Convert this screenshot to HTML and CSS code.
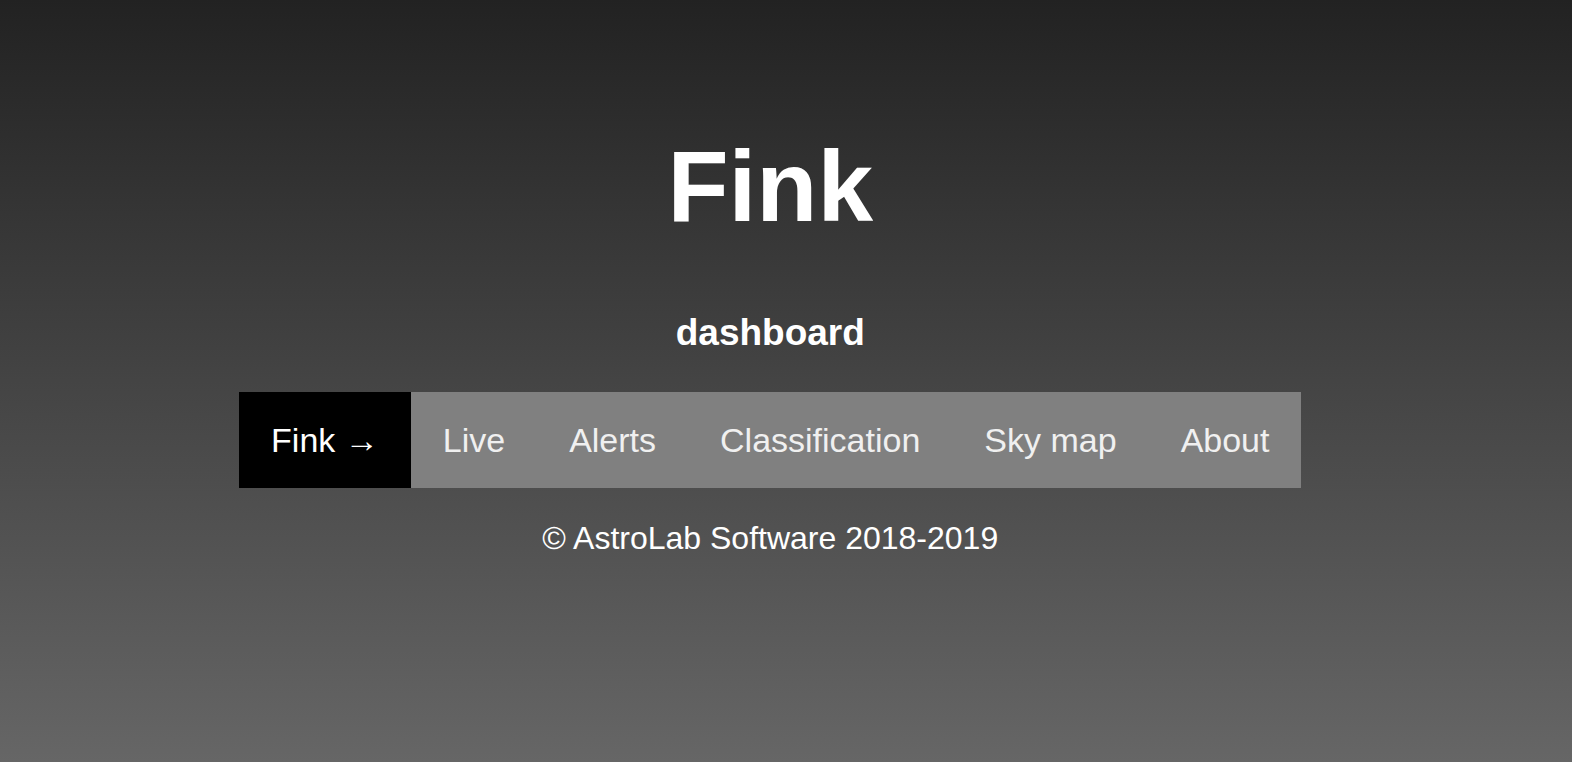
FILE: index.html
```html
<!DOCTYPE html>
<html lang="en">
<head>
<meta charset="utf-8">
<title>Fink dashboard</title>
<link rel="stylesheet" href="styles.css">
</head>
<body>
<main class="page">
  <h1 class="title">Fink</h1>
  <h2 class="subtitle">dashboard</h2>
  <nav class="nav">
    <a class="nav-item nav-item--home" href="#">Fink →</a>
    <a class="nav-item" href="#">Live</a>
    <a class="nav-item" href="#">Alerts</a>
    <a class="nav-item" href="#">Classification</a>
    <a class="nav-item" href="#">Sky map</a>
    <a class="nav-item" href="#">About</a>
  </nav>
  <footer class="footer">© AstroLab Software 2018-2019</footer>
</main>
</body>
</html>
```

FILE: styles.css
```css
html, body {
  margin: 0;
  padding: 0;
  height: 100%;
}

body {
  background: linear-gradient(to bottom, #222222 0%, #666666 100%);
  font-family: "Liberation Sans", Arial, sans-serif;
  color: #ffffff;
  min-height: 762px;
}

.page {
  width: 98%;
  display: flex;
  flex-direction: column;
  align-items: center;
  padding-top: 129px;
}

.title {
  margin: 0;
  font-size: 100px;
  font-weight: bold;
  line-height: 115px;
}

.subtitle {
  margin: 67px 0 0;
  font-size: 37px;
  font-weight: bold;
  line-height: 43px;
}

.nav {
  margin-top: 38px;
  display: flex;
  background: #808080;
}

.nav-item {
  display: block;
  height: 96px;
  line-height: 96px;
  padding: 0 32px;
  font-size: 34px;
  color: #f0f0f0;
  text-decoration: none;
  white-space: nowrap;
}

.nav-item--home {
  background: #000000;
  color: #ffffff;
}

.footer {
  margin-top: 32px;
  font-size: 32px;
  line-height: 37px;
  color: #ffffff;
}
```
